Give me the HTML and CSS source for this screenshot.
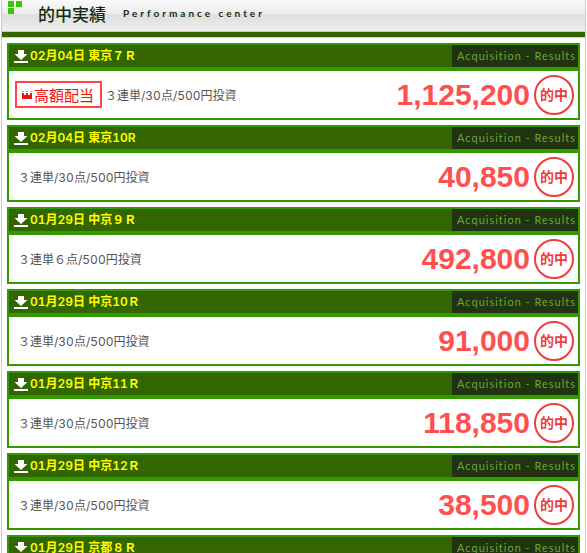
FILE: index.html
```
<!DOCTYPE html>
<html lang="ja">
<head>
    <meta charset="UTF-8">
    <meta name="viewport" content="width=device-width, initial-scale=1.0">
    <title>的中実績</title>
    <link rel="stylesheet" href="styles.css">
</head>
<body>
    <!-- Shared icons -->
    <svg class="sprite" aria-hidden="true">
        <symbol id="icon-down" viewBox="0 0 14 14">
            <path d="M4 1h6v4h3.500L7 11 .5 5H4zM0 12h14v2H0z" fill="#fff"/>
        </symbol>
        <symbol id="icon-crown" viewBox="0 0 10 10">
            <path d="M0 3h2v2h2V3h2v2h2V3h2v6H0z" fill="#e11"/>
            <path d="M0 1h2v1H0zM4 1h2v1H4zM8 1h2v1H8z" fill="#f88"/>
        </symbol>
    </svg>

    <div class="frame">
        <header class="page-header">
            <svg class="squares" width="16" height="16" viewBox="0 0 16 16" aria-hidden="true">
                <path d="M0 1h6v6H0zM8 1h6v6H8zM0 8h6v6H0z" fill="#3c0"/>
            </svg>
            <h1>的中実績</h1>
            <span class="subtitle">Performance center</span>
        </header>

        <main class="results">
            <section class="card">
                <div class="card-head">
                    <svg class="down"><use href="#icon-down"/></svg>
                    <h2>02月04日 東京７Ｒ</h2>
                    <span class="label">Acquisition - Results</span>
                </div>
                <div class="card-body">
                    <span class="high"><svg class="crown"><use href="#icon-crown"/></svg>高額配当</span>
                    <span class="bet">３連単/30点/500円投資</span>
                    <span class="amount">1,125,200</span>
                    <span class="hit">的中</span>
                </div>
            </section>

            <section class="card">
                <div class="card-head">
                    <svg class="down"><use href="#icon-down"/></svg>
                    <h2>02月04日 東京10R</h2>
                    <span class="label">Acquisition - Results</span>
                </div>
                <div class="card-body">
                    <span class="bet">３連単/30点/500円投資</span>
                    <span class="amount">40,850</span>
                    <span class="hit">的中</span>
                </div>
            </section>

            <section class="card">
                <div class="card-head">
                    <svg class="down"><use href="#icon-down"/></svg>
                    <h2>01月29日 中京９Ｒ</h2>
                    <span class="label">Acquisition - Results</span>
                </div>
                <div class="card-body">
                    <span class="bet">３連単６点/500円投資</span>
                    <span class="amount">492,800</span>
                    <span class="hit">的中</span>
                </div>
            </section>

            <section class="card">
                <div class="card-head">
                    <svg class="down"><use href="#icon-down"/></svg>
                    <h2>01月29日 中京10Ｒ</h2>
                    <span class="label">Acquisition - Results</span>
                </div>
                <div class="card-body">
                    <span class="bet">３連単/30点/500円投資</span>
                    <span class="amount">91,000</span>
                    <span class="hit">的中</span>
                </div>
            </section>

            <section class="card">
                <div class="card-head">
                    <svg class="down"><use href="#icon-down"/></svg>
                    <h2>01月29日 中京11Ｒ</h2>
                    <span class="label">Acquisition - Results</span>
                </div>
                <div class="card-body">
                    <span class="bet">３連単/30点/500円投資</span>
                    <span class="amount">118,850</span>
                    <span class="hit">的中</span>
                </div>
            </section>

            <section class="card">
                <div class="card-head">
                    <svg class="down"><use href="#icon-down"/></svg>
                    <h2>01月29日 中京12Ｒ</h2>
                    <span class="label">Acquisition - Results</span>
                </div>
                <div class="card-body">
                    <span class="bet">３連単/30点/500円投資</span>
                    <span class="amount">38,500</span>
                    <span class="hit">的中</span>
                </div>
            </section>

            <section class="card">
                <div class="card-head">
                    <svg class="down"><use href="#icon-down"/></svg>
                    <h2>01月29日 京都８Ｒ</h2>
                    <span class="label">Acquisition - Results</span>
                </div>
                <div class="card-body"></div>
            </section>
        </main>
    </div>
</body>
</html>
```
FILE: styles.css
```
* {
    box-sizing: border-box;
}

html {
    overflow: hidden; /* no scrollbar beside the list */
}

body {
    margin: 0;
    font-family: Inter, "Noto Sans CJK JP", sans-serif;
    font-size: 12px;
    font-variant-numeric: tabular-nums;
    color: #555;
    background: #fff;
}

.sprite {
    display: none;
}

.frame {
    margin: 0 1px;
    border: solid #ccc;
    border-width: 0 1px;
}

/* Page header */
.page-header {
    display: flex;
    align-items: center;
    height: 38px;
    padding: 0 6px 4px;
    background: linear-gradient(#fafafa, #ececec 14px, #dedede 14px, #efefef 31px, #ccc 31px, #ccc 32px, #360 32px, #360 37px, #ccc 37px);
}

.squares {
    align-self: flex-start;
    margin-right: 14px;
}

h1 {
    margin: 0;
    padding-bottom: 8px;
    font-size: 17px;
    font-weight: 500;
    color: #132b10;
}

.subtitle {
    margin-left: 17px;
    padding-bottom: 8px;
    font-family: Lato, sans-serif;
    font-size: 10px;
    font-weight: bold;
    letter-spacing: 3px;
    color: #132b10;
}

/* Result list */
.results {
    display: flex;
    flex-direction: column;
    gap: 5px;
    padding: 5px;
}

.card {
    border: 2px solid #390;
}

.card-head {
    display: flex;
    align-items: center;
    height: 26px;
    padding-left: 5px;
    background: #360;
    border-bottom: 4px solid #390;
}

.down {
    width: 14px;
    height: 14px;
    margin-right: 2px;
}

h2 {
    margin: 0;
    font-size: 12px;
    font-weight: 600;
    line-height: 22px;
    color: #ff0;
}

.label {
    width: 126px;
    margin-left: auto;
    padding-left: 5px;
    background: #231;
    font-family: Lato, sans-serif;
    font-size: 11px;
    line-height: 22px;
    letter-spacing: 1px;
    white-space: nowrap;
    color: #6a3;
}

.card-body {
    display: flex;
    align-items: center;
    height: 47px;
    padding: 0 4px 0 6px;
}

.high {
    display: flex;
    align-items: center;
    gap: 2px;
    width: 87px;
    height: 27px;
    padding-left: 5px;
    border: 2px solid #f44;
    font-size: 15px;
    font-weight: 400;
    white-space: nowrap;
    color: #e11;
}

.crown {
    width: 10px;
    height: 10px;
}

.bet {
    padding-left: 3px;
}

.amount {
    margin-left: auto;
    font-family: "Liberation Sans", Arial, sans-serif;
    font-size: 30px;
    font-weight: bold;
    color: #ff5050;
}

.hit {
    width: 40px;
    height: 40px;
    margin-left: 4px;
    border: 2px solid #f03c3c;
    border-radius: 50%;
    font-size: 14px;
    font-weight: 600;
    line-height: 36px;
    text-align: center;
    color: #f03c3c;
}
```
